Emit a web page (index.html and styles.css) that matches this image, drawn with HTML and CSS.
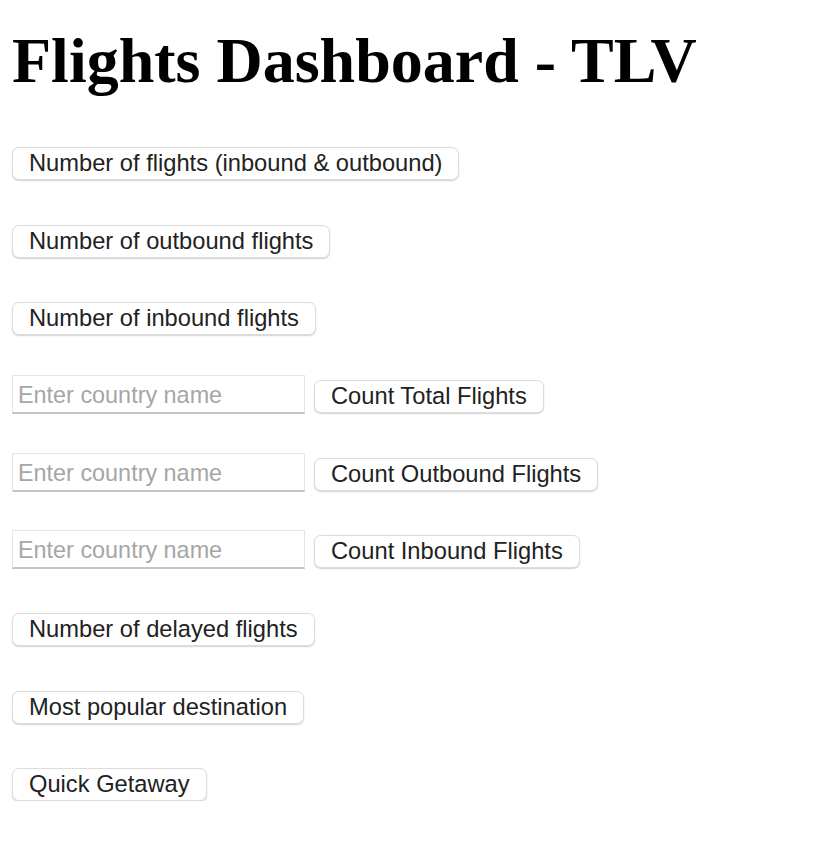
FILE: index.html
```html
<!DOCTYPE html>
<html>
<head>
<meta charset="utf-8">
<link rel="stylesheet" href="styles.css">
</head>
<body>
<h1 class="title">Flights Dashboard - TLV</h1>
<div class="list">
  <div class="row"><button class="btn">Number of flights (inbound &amp; outbound)</button></div>
  <div class="row"><button class="btn">Number of outbound flights</button></div>
  <div class="row"><button class="btn">Number of inbound flights</button></div>
  <div class="row"><input class="field" type="text" placeholder="Enter country name"><button class="btn">Count Total Flights</button></div>
  <div class="row"><input class="field" type="text" placeholder="Enter country name"><button class="btn">Count Outbound Flights</button></div>
  <div class="row"><input class="field" type="text" placeholder="Enter country name"><button class="btn">Count Inbound Flights</button></div>
  <div class="row"><button class="btn">Number of delayed flights</button></div>
  <div class="row"><button class="btn">Most popular destination</button></div>
  <div class="row"><button class="btn">Quick Getaway</button></div>
</div>
</body>
</html>
```
FILE: styles.css
```css
html, body {
  margin: 0;
  background: #fff;
}
body {
  padding: 1px 12px 0;
  font-family: "Liberation Sans", Arial, sans-serif;
}
.title {
  font-family: "Liberation Serif", "Times New Roman", serif;
  font-weight: bold;
  font-size: 64px;
  line-height: 1.15;
  margin: 22.6px 0 0;
  color: #000;
  white-space: nowrap;
}
.list {
  display: flex;
  flex-direction: column;
  gap: 44.625px;
  margin-top: 50px;
}
.row {
  display: flex;
  align-items: flex-start;
  height: 33px;
}
.btn {
  box-sizing: border-box;
  height: 33px;
  padding: 0 16px;
  font-family: "Liberation Sans", Arial, sans-serif;
  font-size: 23.7px;
  line-height: 31px;
  color: #222;
  background: #fff;
  border: 1px solid #dcdcdc;
  border-radius: 7px;
  box-shadow: 0 1px 1.5px rgba(0, 0, 0, 0.18);
  white-space: nowrap;
  margin: 0;
}
.field {
  box-sizing: border-box;
  width: 293px;
  height: 39px;
  margin: -5px 9px -1px 0;
  padding: 3px 5px 0;
  font-family: "Liberation Sans", Arial, sans-serif;
  font-size: 23.4px;
  color: #222;
  background: #fff;
  border: 1px solid #e4e4e4;
  border-bottom: 2px solid #c4c4c4;
  border-radius: 0;
  outline: none;
}
.field::placeholder {
  color: #a6a6a6;
}
```
